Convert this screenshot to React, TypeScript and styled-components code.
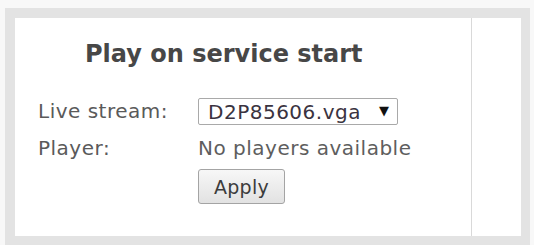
import React from "react";
import styled, { createGlobalStyle } from "styled-components";

const Global = createGlobalStyle`
  html, body { margin: 0; padding: 0; background: #f8f8f8; }
  body { font-family: "DejaVu Sans", Verdana, sans-serif; }
`;

const Frame = styled.div`
  margin: 8px 0 0 5px;
  width: 525px;
  height: 237px;
  box-sizing: border-box;
  padding: 10px 9px 9px 10px;
  background: #e3e3e3;
`;

const Inner = styled.div`
  display: flex;
  height: 100%;
  background: #ffffff;
`;

const MainPanel = styled.section`
  width: 456px;
  border-right: 1px solid #d9d9d9;
  box-sizing: content-box;
  padding: 21px 0 0 0;
`;

const SidePanel = styled.aside`
  flex: 1;
  background: #ffffff;
`;

const Title = styled.h2`
  margin: 0 0 0 70px;
  font-size: 24px;
  line-height: 30px;
  font-weight: bold;
  color: #474747;
  letter-spacing: 0px;
`;

const Form = styled.div`
  display: grid;
  grid-template-columns: 160px auto;
  align-items: center;
  row-gap: 0;
  margin: 29px 0 0 23px;
`;

const Label = styled.div<{ $top?: number }>`
  font-size: 20px;
  line-height: 27px;
  color: #5a5a5a;
  letter-spacing: 0.5px;
  margin-top: ${(p) => p.$top ?? 0}px;
`;

const Value = styled.div<{ $top?: number }>`
  font-size: 20px;
  line-height: 27px;
  color: #5e5e5e;
  letter-spacing: 0.5px;
  margin-top: ${(p) => p.$top ?? 0}px;
`;

const SelectWrap = styled.div`
  position: relative;
  width: 200px;
  height: 27px;
`;

const Select = styled.select`
  appearance: none;
  -webkit-appearance: none;
  width: 200px;
  height: 27px;
  box-sizing: border-box;
  border: 1px solid #a9a9a9;
  border-radius: 2px;
  background: #fff;
  padding: 0 0 0 9px;
  font-family: "DejaVu Sans", Verdana, sans-serif;
  font-size: 20px;
  letter-spacing: 0.5px;
  color: #3a3340;
  outline: none;
`;

const Arrow = styled.span`
  position: absolute;
  right: 9px;
  top: 4px;
  font-size: 13px;
  line-height: 18px;
  color: #111;
  pointer-events: none;
  font-family: "DejaVu Sans", sans-serif;
`;

const Button = styled.button`
  width: 87px;
  height: 35px;
  box-sizing: border-box;
  margin-top: 7px;
  border: 1px solid #a4a4a4;
  border-radius: 3px;
  background: linear-gradient(#f7f7f7, #e2e2e2);
  font-family: "DejaVu Sans", Verdana, sans-serif;
  font-size: 19px;
  letter-spacing: 0.3px;
  color: #3c3c3c;
  padding: 0;
  grid-column: 2;
  justify-self: start;
`;

export default function App() {
  return (
    <>
      <Global />
      <Frame>
        <Inner>
          <MainPanel>
            <Title>Play on service start</Title>
            <Form>
              <Label>Live stream:</Label>
              <SelectWrap>
                <Select defaultValue="D2P85606.vga">
                  <option>D2P85606.vga</option>
                </Select>
                <Arrow>▼</Arrow>
              </SelectWrap>
              <Label $top={10}>Player:</Label>
              <Value $top={10}>No players available</Value>
              <Button>Apply</Button>
            </Form>
          </MainPanel>
          <SidePanel />
        </Inner>
      </Frame>
    </>
  );
}
